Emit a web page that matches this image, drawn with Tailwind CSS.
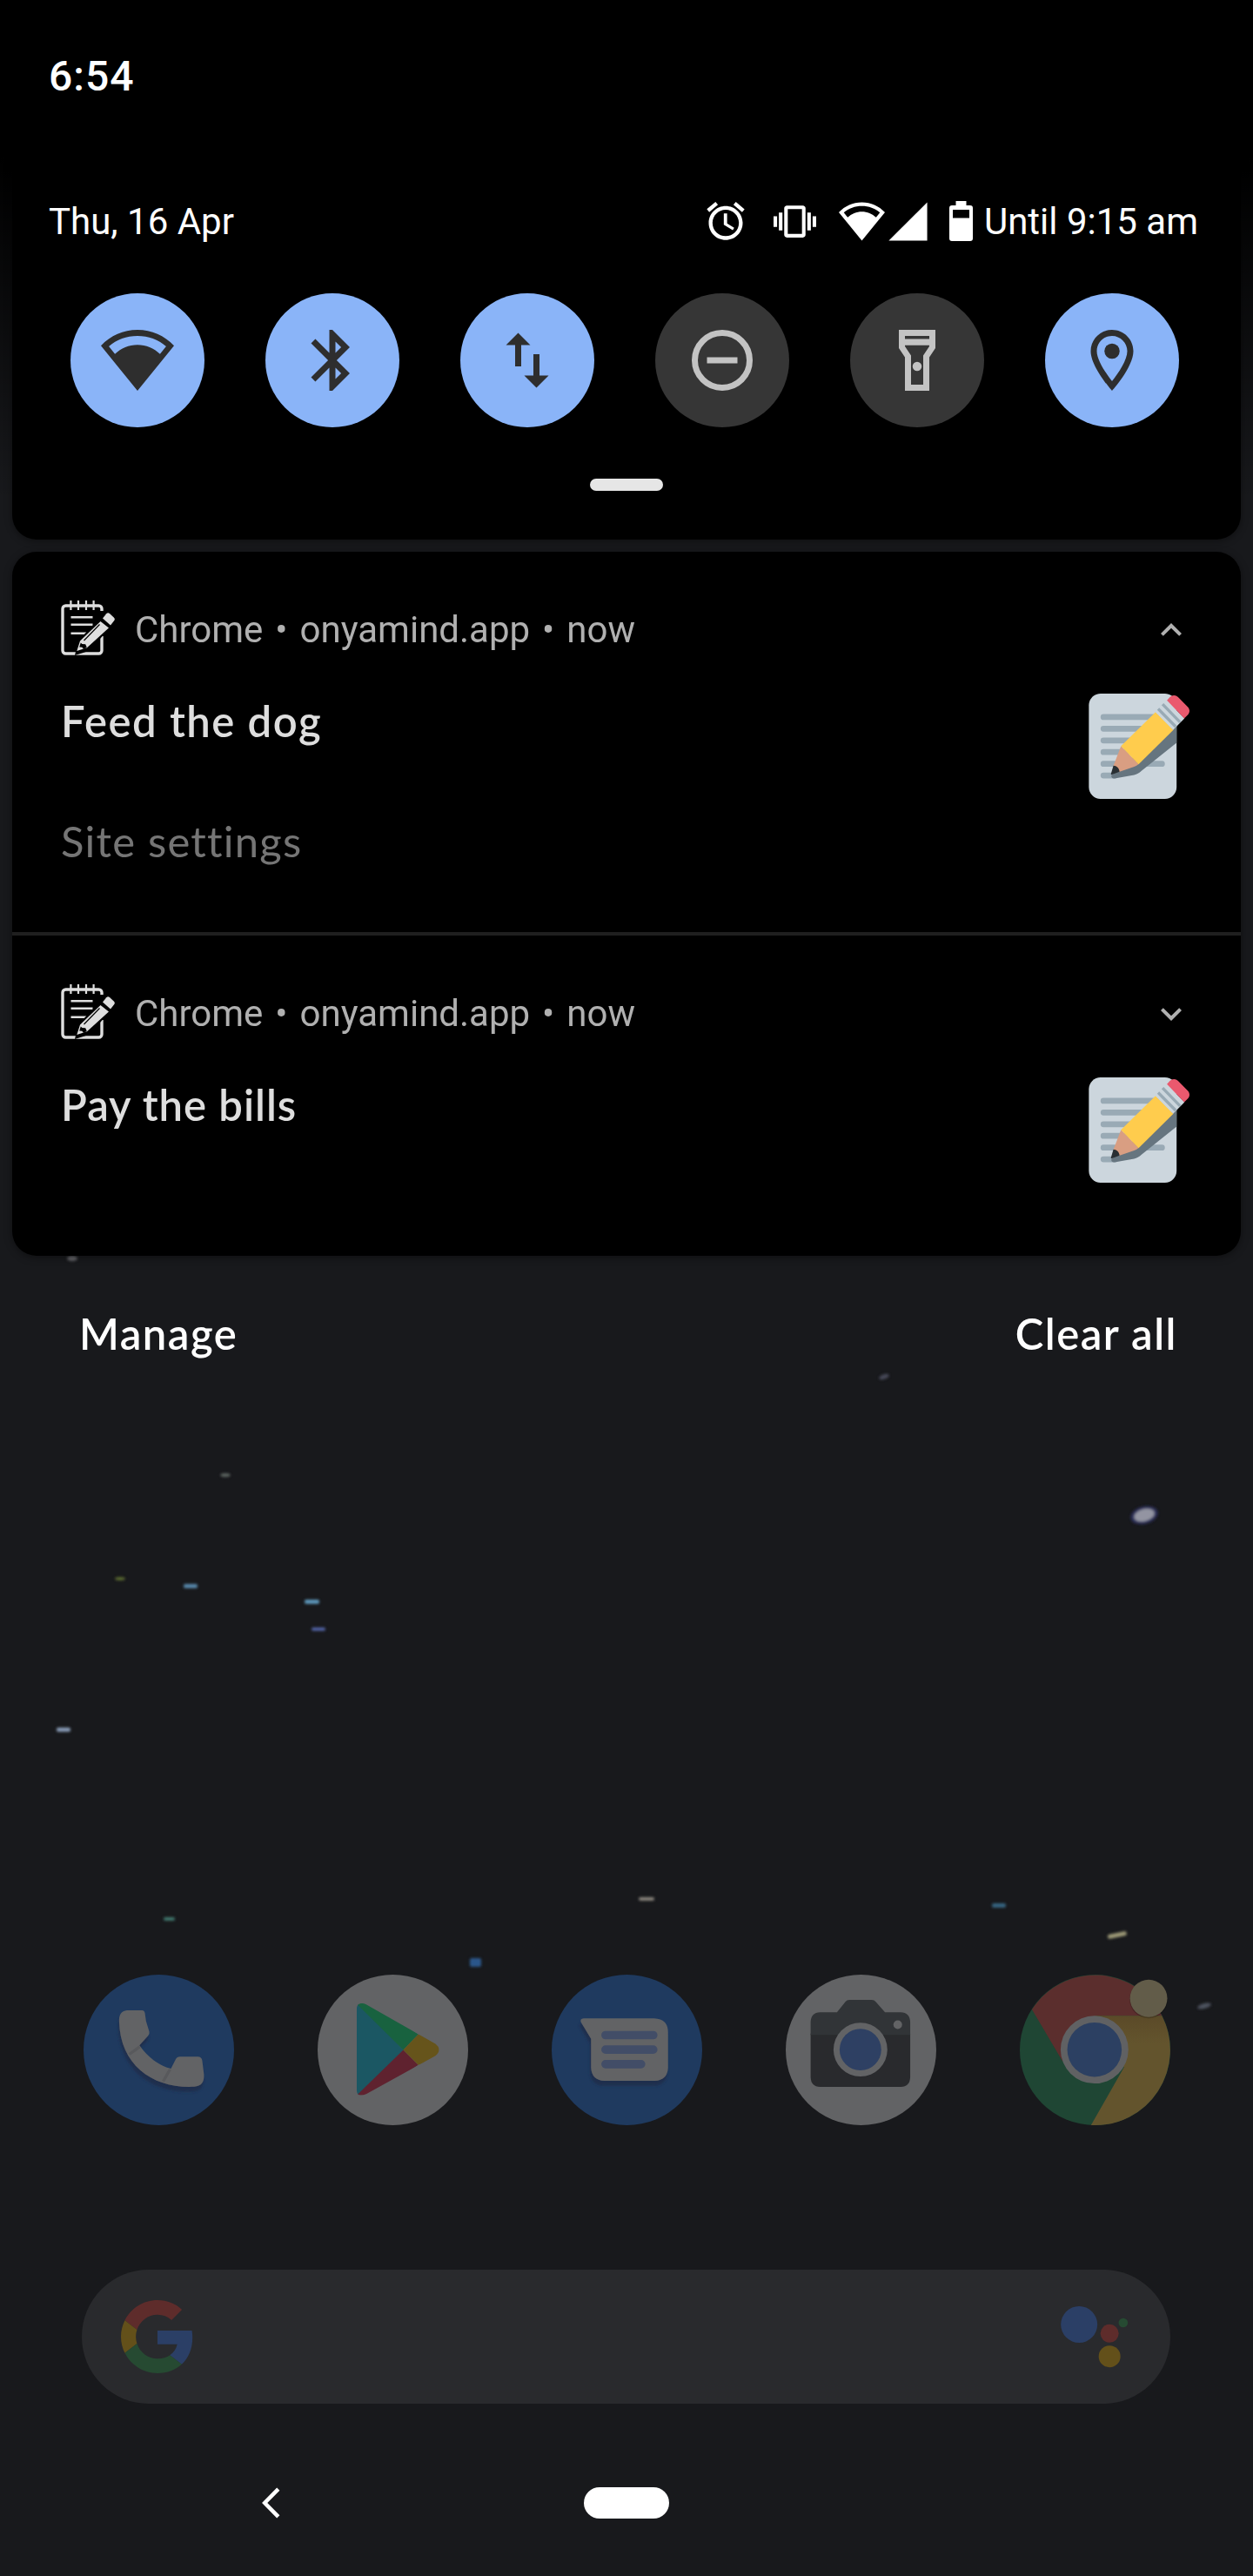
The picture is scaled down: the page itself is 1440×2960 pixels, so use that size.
<!DOCTYPE html>
<html lang="en">
<head>
<meta charset="utf-8">
<title>Notification shade</title>
<script src="https://cdn.jsdelivr.net/npm/@tailwindcss/browser@4"></script>
</head>
<body class="bg-[#18191c]">
<svg class="hidden">
  <defs>
    <symbol id="wifi" viewBox="0 0 24 24"><path fill-rule="evenodd" d="M12 22L0 7.2C3.2 3.9 7.300 2 12 2s8.800 1.900 12 5.200zM4.600 9.900C6.600 8 9.200 6.900 12 6.900s5.400 1.100 7.400 3l2-2.500C18.800 5.200 15.600 4 12 4S5.200 5.200 2.600 7.400z"/></symbol>
    <symbol id="note" viewBox="0 0 62 63">
      <g fill="none" stroke="#dedede">
        <path stroke-width="3.4" d="M47 12V9.500a3.500 3.500 0 0 0-3.500-3.500h-38A3.500 3.500 0 0 0 2 9.500v48A3.500 3.500 0 0 0 5.500 61h38a3.500 3.500 0 0 0 3.500-3.500V41"/>
        <path stroke-width="2.200" d="M11.400 0v11M20 0v11M29 0v11M37.600 0v11"/>
        <path stroke-width="2.600" d="M11.500 19.300h25M11.500 27.700h25M11.500 37.700h18"/>
      </g>
      <path fill="#000" d="M46 19l7-8 10 10-6 10-25 27-16 5 4-17z"/>
      <path fill="#dedede" fill-rule="evenodd" d="M45.500 24l9.500 7.500L30 54.300 18.300 58 22 46.500zM22.800 48.500l-1.600 5 3.300.200 1.200 2.300 4-2.200-1.500-3.600-3.800-.200z"/>
      <path stroke="#000" stroke-width="1.200" d="M44.500 27.500L26.500 46"/>
      <path fill="#dedede" d="M48 20.500l4.200-5.200q1.800-2 3.800-.300l4.800 4.400q1.800 1.800.300 3.900L57 28.500z"/>
    </symbol>
    <symbol id="memo" viewBox="0 0 36 36">
      <path fill="#ccd6dd" d="M31 32c0 2.209-1.791 4-4 4H5c-2.209 0-4-1.791-4-4V4c0-2.209 1.791-4 4-4h22c2.209 0 4 1.791 4 4v28z"/>
      <path stroke="#99aab5" stroke-width="2" stroke-linecap="round" d="M6 8h18M6 12h14M6 16h12M6 20h8M6 24h20M6 28h4"/>
      <path fill="#66757f" d="M31 10.500v6.300L19 26.400c-.8.800-1.600 1.200-2.500 1.400L9.800 29c-.7.100-1.200-.2-1.100-1L17 21z"/>
      <path fill="#d99e82" d="M12 17.900L9.400 24.700l1.900 2.100L16.500 25c.6-.2 1.100-.5 1.500-.900z"/>
      <path fill="#292f33" d="M9.400 24.600c1.100 0 2 .9 2.100 2.100L8.900 27.700c-.3.100-.4-.1-.3-.4z"/>
      <path fill="#ffcc4d" d="M23.800 6.300l6.100 6.100L18 24.200l-6-6.300z"/>
      <path fill="#ccd6dd" d="M27.700 2.300l6 6.200-3.900 3.900-6-6.100z"/>
      <path stroke="#99aab5" stroke-width="1" d="M26.200 3.600l6 6.200M24.700 5.200l6 6.100"/>
      <path fill="#ea596e" d="M27.700 2.300l1-1.100c.8-.8 2-.8 2.800 0l3.300 3.300c.8.800.8 2 0 2.800l-1.200 1.200z"/>
    </symbol>
  </defs>
</svg>

<main class="relative isolate flex h-[2960px] w-[1440px] flex-col overflow-hidden font-['Roboto',sans-serif]">
  <!-- wallpaper stars -->
  <svg class="absolute inset-0 -z-10" width="1440" height="2960" viewBox="0 0 1440 2960">
    <defs><filter id="soft" x="-50%" y="-100%" width="200%" height="300%"><feGaussianBlur stdDeviation="1.500"/></filter></defs>
    <g filter="url(#soft)">
      <ellipse cx="83" cy="1446" rx="6" ry="3" fill="#636468"/>
      <ellipse cx="1016" cy="1582" rx="6" ry="2.800" fill="#464858" transform="rotate(-20 1016 1582)"/>
      <ellipse cx="259" cy="1695" rx="6" ry="2.200" fill="#5a625f"/>
      <ellipse cx="1315" cy="1741" rx="16" ry="10" fill="#2c2e58" transform="rotate(-15 1315 1741)"/>
      <ellipse cx="1315" cy="1741" rx="12" ry="7" fill="#9394a2" transform="rotate(-15 1315 1741)"/>
      <ellipse cx="138" cy="1814" rx="6" ry="2" fill="#58682f"/>
      <rect x="211" y="1820" width="16" height="5" rx="2" fill="#5484a6"/>
      <rect x="350" y="1838" width="17" height="5" rx="2" fill="#5b94b8"/>
      <rect x="358" y="1870" width="16" height="4" rx="2" fill="#5060a0"/>
      <rect x="65" y="1985" width="16" height="5" rx="2" fill="#8496b0"/>
      <rect x="734" y="2180" width="18" height="4" rx="2" fill="#87837a"/>
      <rect x="188" y="2203" width="13" height="4" rx="2" fill="#3f766c"/>
      <rect x="1140" y="2187" width="16" height="5" rx="2" fill="#35647f"/>
      <rect x="1273" y="2221" width="22" height="5" rx="2" fill="#9b9876" transform="rotate(-12 1284 2224)"/>
      <rect x="540" y="2250" width="13" height="10" rx="2" fill="#2a568a"/>
      <ellipse cx="1384" cy="2305" rx="8" ry="3" fill="#4d525f" transform="rotate(-15 1384 2305)"/>
    </g>
  </svg>

  <header class="flex h-[180px] shrink-0 items-start bg-black px-14 pt-[60px]">
    <span class="text-[48px] leading-[56px] font-medium tracking-[1px] text-white">6:54</span>
  </header>

  <div class="shrink-0 bg-linear-to-b from-black to-transparent to-90% px-[14px]">
    <section class="flex h-[440px] flex-col rounded-b-[28px] bg-black shadow-[0_2px_8px_rgba(0,0,0,0.4)]">
      <div class="mt-[48px] flex h-[52px] items-center justify-between pr-[49px] pl-[42px] text-[42px] text-white">
        <span class="pt-[2px] leading-[52px]">Thu, 16 Apr</span>
        <div class="flex items-center">
          <svg class="size-[52px] fill-white" viewBox="0 0 24 24"><path d="M22 5.720l-4.600-3.860-1.290 1.530 4.600 3.860L22 5.720zM7.880 3.390L6.600 1.860 2 5.710l1.290 1.530 4.590-3.850zM12.500 8H11v6l4.750 2.850.75-1.230-3.750-2.370V8zM12 4c-4.970 0-9 4.030-9 9s4.020 9 9 9c4.970 0 9-4.030 9-9s-4.030-9-9-9zm0 16c-3.870 0-7-3.130-7-7s3.130-7 7-7 7 3.130 7 7-3.130 7-7 7z"/></svg>
          <svg class="ml-[29px] size-[49px] fill-white" viewBox="0 0 24 24"><path d="M0 15h2V9H0v6zm3 2h2V7H3v10zm19-8v6h2V9h-2zm-3 8h2V7h-2v10zM16.500 3h-9C6.670 3 6 3.670 6 4.500v15c0 .830.670 1.500 1.500 1.500h9c.830 0 1.500-.670 1.500-1.500v-15c0-.830-.670-1.500-1.500-1.500zM16 19H8V5h8v14z"/></svg>
          <svg class="ml-[26px] size-[53px] fill-white"><use href="#wifi"/></svg>
          <svg class="size-[53px] fill-white" viewBox="0 0 24 24"><path d="M2 22h20V2z"/></svg>
          <svg class="ml-[21px] h-[46px] w-[27px] fill-white" viewBox="0 0 27 46"><path fill-rule="evenodd" d="M7.500 0h12v5H24a3 3 0 0 1 3 3v35a3 3 0 0 1-3 3H3a3 3 0 0 1-3-3V8a3 3 0 0 1 3-3h4.500zM4 10v9.500h19V10z"/></svg>
          <span class="ml-[13px] pt-[2px] leading-[50px]">Until 9:15 am</span>
        </div>
      </div>

      <div class="mt-[57px] flex justify-between pr-[71px] pl-[67px]">
        <div class="flex size-[154px] items-center justify-center rounded-full bg-[#8ab4f8]"><svg class="size-[84px] fill-[#2e2e2e]"><use href="#wifi"/></svg></div>
        <div class="flex size-[154px] items-center justify-center rounded-full bg-[#8ab4f8]"><svg class="size-[84px] fill-[#2e2e2e]" viewBox="0 0 24 24"><path d="M17.710 7.710L12 2h-1v7.590L6.410 5 5 6.410 10.590 12 5 17.590 6.410 19 11 14.410V22h1l5.710-5.710-4.300-4.290 4.300-4.290zM13 5.830l1.880 1.880L13 9.590V5.830zm1.880 10.460L13 18.170v-3.760l1.880 1.880z"/></svg></div>
        <div class="flex size-[154px] items-center justify-center rounded-full bg-[#8ab4f8]"><svg class="size-[84px] fill-[#2e2e2e]" viewBox="0 0 24 24"><path d="M16 17.010V10h-2v7.010h-3L15 21l4-3.990h-3zM9 3L5 6.990h3V14h2V6.990h3L9 3z"/></svg></div>
        <div class="flex size-[154px] items-center justify-center rounded-full bg-[#363636]"><svg class="size-[84px] fill-none stroke-[#c3c3c3] stroke-2" viewBox="0 0 24 24"><circle cx="12" cy="12" r="9"/><path d="M7 12h10"/></svg></div>
        <div class="flex size-[154px] items-center justify-center rounded-full bg-[#363636]"><svg class="size-[84px] fill-[#c3c3c3]" viewBox="0 0 24 24"><path fill-rule="evenodd" d="M6 2h12v6l-2 3v11H8V11L6 8zM8 4v1h8V4zM8 7.100v.300l2 3V20h4v-9.600l2-3v-.300z"/><circle cx="12" cy="14" r="1.500"/></svg></div>
        <div class="flex size-[154px] items-center justify-center rounded-full bg-[#8ab4f8]"><svg class="size-[84px] fill-[#2e2e2e]" viewBox="0 0 24 24"><path d="M12 2C8.130 2 5 5.130 5 9c0 5.250 7 13 7 13s7-7.750 7-13c0-3.870-3.130-7-7-7zM7 9c0-2.760 2.240-5 5-5s5 2.240 5 5c0 2.880-2.880 7.190-5 9.880C9.920 16.210 7 11.850 7 9z"/><circle cx="12" cy="9" r="2.500"/></svg></div>
      </div>
      <div class="mt-[59px] h-[14px] w-[84px] self-center rounded-full bg-[#e6e6e6]"></div>
    </section>
  </div>

  <section class="mx-[14px] mt-[14px] flex h-[809px] shrink-0 flex-col overflow-hidden rounded-[28px] bg-black shadow-[0_2px_10px_rgba(0,0,0,0.4)]">
    <article class="flex h-[437px] flex-col px-14 pt-[56px]">
      <div class="flex h-[63px] text-[42px] leading-[67px] text-[#b0b0b0]">
        <svg class="h-[63px] w-[62px]"><use href="#note"/></svg>
        <span class="ml-[23px]">Chrome</span><span class="mx-[14px]">•</span><span>onyamind.app</span><span class="mx-[14px]">•</span><span>now</span>
        <svg class="mt-[10px] mr-0 ml-auto size-12 fill-[#b0b0b0]" viewBox="0 0 24 24"><path d="M12 8l-6 6 1.410 1.410L12 10.830l4.590 4.580L18 14z"/></svg>
      </div>
      <div class="mt-[44px] flex justify-between pr-[1px]">
        <div class="flex flex-col font-['Lato',sans-serif] text-[49px] leading-[60px]">
          <h2 class="mt-px font-semibold tracking-[1.5px] text-[#dedede]">Feed the dog</h2>
          <span class="mt-[78px] tracking-[1.2px] text-[#757575]">Site settings</span>
        </div>
        <svg class="size-[121px]"><use href="#memo"/></svg>
      </div>
    </article>
    <div class="h-1 shrink-0 bg-[#1f1f1f]"></div>
    <article class="flex flex-col px-14 pt-[56px]">
      <div class="flex h-[63px] text-[42px] leading-[67px] text-[#b0b0b0]">
        <svg class="h-[63px] w-[62px]"><use href="#note"/></svg>
        <span class="ml-[23px]">Chrome</span><span class="mx-[14px]">•</span><span>onyamind.app</span><span class="mx-[14px]">•</span><span>now</span>
        <svg class="mt-[10px] mr-0 ml-auto size-12 fill-[#b0b0b0]" viewBox="0 0 24 24"><path d="M16.590 8.590L12 13.170 7.410 8.590 6 10l6 6 6-6z"/></svg>
      </div>
      <div class="mt-[44px] flex justify-between pr-[1px]">
        <h2 class="mt-px font-['Lato',sans-serif] text-[49px] leading-[60px] font-semibold tracking-[1px] text-[#dedede]">Pay the bills</h2>
        <svg class="size-[121px]"><use href="#memo"/></svg>
      </div>
    </article>
  </section>

  <div class="mt-[59px] flex h-[60px] shrink-0 justify-between pr-[87px] pl-[91px] font-['Lato',sans-serif] text-[49px] leading-[60px] font-semibold tracking-[1.5px] text-white">
    <span>Manage</span><span>Clear all</span>
  </div>

  <div class="mt-[707px] flex shrink-0 justify-between pr-[95px] pl-[96px]">
    <svg class="size-[173px]" viewBox="108 86 520 520">
      <defs><filter id="drop" x="-30%" y="-30%" width="160%" height="170%"><feDropShadow dx="-3" dy="17" stdDeviation="5" flood-color="#1f2d4c" flood-opacity=".9"/></filter></defs>
      <circle cx="368" cy="346" r="260" fill="#1f3a5f"/>
      <g filter="url(#drop)">
        <path fill="#626365" d="M258 209h52q8 0 10 10l4 28 11 36q2 8-4 14l-30 33c30 42 66 69 109 81l16-32q5-10 15-10h62q13 0 15 14l6 48q2 40-34 42C350 480 235 400 231 248q-2-36 27-39z"/>
      </g>
      <path stroke="#58595c" stroke-width="10" d="M266 361l36-26M383 455l24-42"/>
    </svg>
    <svg class="size-[173px]" viewBox="915 86 520 520">
      <defs>
        <clipPath id="playClip"><path d="M1050 205q0-20 18-20 8 0 16 5l238 135q25 20 0 41l-238 132q-34 14-34-14z"/></clipPath>
      </defs>
      <circle cx="1175" cy="346" r="260" fill="#626365"/>
      <g clip-path="url(#playClip)">
        <path fill="#1b5763" d="M1040 170v350l172-174z"/>
        <path fill="#18623f" d="M1053 180v10l158 156 52-54-180-120z"/>
        <path fill="#5f222f" d="M1053 512v-12l158-154 52 52-180 120z"/>
        <path fill="#66541b" d="M1211 346l52-54 90 30v50l-90 26z"/>
      </g>
    </svg>
    <svg class="size-[173px]" viewBox="102 86 520 520">
      <circle cx="362" cy="346" r="260" fill="#1f3a5f"/>
      <path filter="url(#drop)" fill="#626365" d="M212 237h244q48 2 48 48v122q-2 44-46 46H284q-44-2-46-46V308l-35-58q-4-12 9-13z"/>
      <path stroke="#424d67" stroke-width="29" stroke-linecap="round" d="M288 295h165M288 345h165M288 395h123"/>
    </svg>
    <svg class="size-[173px]" viewBox="909 86 520 520">
      <circle cx="1169" cy="346" r="260" fill="#626365"/>
      <path fill="#292a2d" d="M995 290h344v150q-1 33-33 34h-278q-32-1-33-34z"/>
      <path fill="#313437" d="M995 294v-44q1-33 33-34h58l29-36q5-7 14-7h77q9 0 14 7l32 36h54q32 1 33 34v44z"/>
      <circle cx="1167" cy="345" r="93" fill="#626365"/>
      <circle cx="1167" cy="345" r="72" fill="#2e4063"/>
      <circle cx="1296" cy="259" r="15" fill="#626365"/>
    </svg>
    <svg class="size-[173px] overflow-visible" viewBox="126 146 520 520">
      <defs>
        <linearGradient id="yellowShade" x1="0" y1="0" x2="0" y2="1"><stop offset="0" stop-color="#5b4a28"/><stop offset=".25" stop-color="#63542d"/></linearGradient>
      </defs>
      <circle cx="386" cy="406" r="260" fill="#1f4634"/>
      <path fill="#5b2e2d" d="M168 266A260 260 0 0 1 617 288H386L274 446z"/>
      <path fill="url(#yellowShade)" d="M386 288H617A260 260 0 0 1 372 666L486 466z"/>
      <circle cx="384" cy="405" r="117" fill="#606163"/>
      <circle cx="384" cy="405" r="94" fill="#2c4062"/>
      <circle cx="571" cy="231" r="66" fill="#000" opacity=".2"/>
      <circle cx="571" cy="228" r="64.500" fill="#625c49"/>
    </svg>
  </div>

  <div class="mr-[95px] ml-[94px] mt-[166px] flex h-[154px] shrink-0 items-center justify-between rounded-full bg-[#292a2d] pr-[47px] pl-[45px]">
    <svg class="size-[84px]" viewBox="0 0 48 48">
      <path fill="#5e2c2b" d="M24 9.500c3.540 0 6.710 1.220 9.210 3.600l6.850-6.850C35.900 2.380 30.470 0 24 0 14.620 0 6.510 5.380 2.560 13.220l7.980 6.190C12.430 13.720 17.740 9.500 24 9.500z"/>
      <path fill="#2b3f66" d="M46.980 24.550c0-1.570-.150-3.090-.380-4.550H24v9.020h12.940c-.580 2.960-2.260 5.480-4.780 7.180l7.730 6c4.510-4.180 7.090-10.360 7.090-17.650z"/>
      <path fill="#63501a" d="M10.530 28.590c-.480-1.450-.760-2.990-.760-4.590s.270-3.140.760-4.590l-7.980-6.190C.920 16.460 0 20.120 0 24c0 3.880.920 7.540 2.560 10.780l7.970-6.190z"/>
      <path fill="#264a32" d="M24 48c6.480 0 11.930-2.130 15.890-5.810l-7.730-6c-2.150 1.450-4.920 2.300-8.160 2.300-6.260 0-11.570-4.220-13.470-9.910l-7.980 6.190C6.510 42.620 14.620 48 24 48z"/>
    </svg>
    <svg class="h-[84px] w-[79px]" viewBox="358 189 237 252">
      <circle cx="421.500" cy="273" r="63" fill="#2b3f66"/><circle cx="526.500" cy="304" r="31.500" fill="#5e2c2b"/><circle cx="526.500" cy="383" r="37.500" fill="#63501a"/><circle cx="573.500" cy="267" r="16" fill="#264a32"/>
    </svg>
  </div>

  <nav class="mt-[96px] flex h-9 shrink-0 items-center pl-[300px]">
    <svg class="h-9 w-[22px] fill-none stroke-white stroke-[4.500]" viewBox="0 0 22 36"><path d="M19.800 2.200L4.200 18l15.600 15.800"/></svg>
    <div class="ml-[349px] h-9 w-[98px] rounded-full bg-white"></div>
  </nav>
</main>
</body>
</html>
